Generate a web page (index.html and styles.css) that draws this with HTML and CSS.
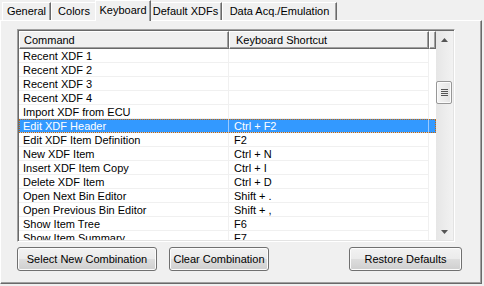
FILE: index.html
```html
<!DOCTYPE html>
<html lang="en">

<head>
    <meta charset="UTF-8">
    <title>Options - Keyboard</title>
    <link rel="stylesheet" href="styles.css">
</head>

<body>
    <div class="window">
        <div class="tabs">
            <div class="tab tab-general">General</div>
            <div class="tab tab-colors">Colors</div>
            <div class="tab tab-keyboard active">Keyboard</div>
            <div class="tab tab-xdfs">Default XDFs</div>
            <div class="tab tab-acq">Data Acq./Emulation</div>
        </div>

        <div class="page">
            <div class="list">
                <div class="list-main">
                    <div class="header">
                        <div class="hcell col-cmd">Command</div>
                        <div class="hcell col-key">Keyboard Shortcut</div>
                        <div class="hcell filler"></div>
                    </div>
                    <div class="rows">
                        <div class="row"><span>Recent XDF 1</span><span></span></div>
                        <div class="row"><span>Recent XDF 2</span><span></span></div>
                        <div class="row"><span>Recent XDF 3</span><span></span></div>
                        <div class="row"><span>Recent XDF 4</span><span></span></div>
                        <div class="row"><span>Import XDF from ECU</span><span></span></div>
                        <div class="row selected"><span>Edit XDF Header</span><span>Ctrl + F2</span></div>
                        <div class="row"><span>Edit XDF Item Definition</span><span>F2</span></div>
                        <div class="row"><span>New XDF Item</span><span>Ctrl + N</span></div>
                        <div class="row"><span>Insert XDF Item Copy</span><span>Ctrl + I</span></div>
                        <div class="row"><span>Delete XDF Item</span><span>Ctrl + D</span></div>
                        <div class="row"><span>Open Next Bin Editor</span><span>Shift + .</span></div>
                        <div class="row"><span>Open Previous Bin Editor</span><span>Shift + ,</span></div>
                        <div class="row"><span>Show Item Tree</span><span>F6</span></div>
                        <div class="row"><span>Show Item Summary</span><span>F7</span></div>
                    </div>
                </div>

                <div class="scrollbar">
                    <div class="arrow">
                        <svg width="7" height="4" viewBox="0 0 7 4"><path d="M3.5 0 L7 4 L0 4 Z" fill="#555"/></svg>
                    </div>
                    <div class="track">
                        <div class="thumb">
                            <span class="grip"></span>
                            <span class="grip"></span>
                            <span class="grip"></span>
                            <span class="grip"></span>
                        </div>
                    </div>
                    <div class="arrow">
                        <svg width="7" height="4" viewBox="0 0 7 4"><path d="M0 0 L7 0 L3.5 4 Z" fill="#555"/></svg>
                    </div>
                </div>
            </div>

            <div class="buttons">
                <button class="btn btn-select">Select New Combination</button>
                <button class="btn btn-clear">Clear Combination</button>
                <button class="btn btn-restore">Restore Defaults</button>
            </div>
        </div>
    </div>
</body>

</html>
```

FILE: styles.css
```css
* {
    margin: 0;
    padding: 0;
    box-sizing: border-box;
}

body {
    font-family: 'Liberation Sans', Arial, sans-serif;
    font-size: 11px;
    color: #000;
    background: #f0f0f0;
}

.window {
    width: 484px;
    height: 286px;
}

/* tab strip */
.tabs {
    display: flex;
    align-items: flex-end;
    height: 20px;
    padding-left: 2px;
    position: relative;
    z-index: 1;
}

.tab {
    height: 18px;
    line-height: 17px;
    text-align: center;
    background: #f0f0f0;
    border-top: 1px solid #fff;
    border-left: 1px solid #fff;
    border-right: 1px solid #696969;
    box-shadow: inset -1px 0 #a0a0a0;
    white-space: nowrap;
}

.tab.active {
    height: 21px;
    line-height: 18px;
    margin: 0 -2px -1px;
    position: relative;
    z-index: 2;
}

.tab-general { width: 49px; }
.tab-colors { width: 46px; }
.tab-keyboard { width: 56px; }
.tab-xdfs { width: 73px; }
.tab-acq { width: 115px; }

/* tab page */
.page {
    width: 482px;
    height: 264px;
    border-top: 1px solid #fff;
    border-left: 1px solid #fff;
    border-right: 1px solid #696969;
    border-bottom: 1px solid #696969;
    box-shadow: inset -1px -1px #a0a0a0;
    padding: 8px 19px 0 16px;
}

/* list view */
.list {
    display: flex;
    width: 438px;
    height: 213px;
    background: #fff;
    border: 1px solid;
    border-color: #a0a0a0 #fff #fff #a0a0a0;
    box-shadow: inset 1px 1px #696969, inset -1px -1px #e3e3e3;
    padding: 1px;
}

.list-main {
    flex: 1;
    overflow: hidden;
}

.header {
    display: flex;
    height: 18px;
}

.hcell {
    background: #f0f0f0;
    border-top: 1px solid #fff;
    border-left: 1px solid #fff;
    border-right: 1px solid #696969;
    border-bottom: 1px solid #696969;
    box-shadow: inset -1px -1px #a0a0a0;
    line-height: 16px;
    padding-left: 4px;
    white-space: nowrap;
}

.col-cmd {
    width: 210px;
}

.col-key {
    width: 200px;
    padding-left: 6px;
}

.filler {
    flex: 1;
}

.row {
    display: grid;
    grid-template-columns: 210px 200px;
    height: 14px;
}

.row span {
    line-height: 12px;
    padding: 1px 0 0 4px;
    border-right: 1px solid #f0f0f0;
    border-bottom: 1px solid #f0f0f0;
    white-space: nowrap;
    overflow: hidden;
}

.row span + span {
    padding-left: 5px;
}

.row.selected {
    background: #3399ff;
    color: #fff;
    outline: 1px dotted #cc6600;
    outline-offset: -1px;
}

.row.selected span {
    border-color: #9ccbff;
}

/* scrollbar */
.scrollbar {
    width: 17px;
    display: flex;
    flex-direction: column;
    background: linear-gradient(to right, #e6e6e6, #f2f2f2);
}

.arrow {
    height: 17px;
    display: flex;
    align-items: center;
    justify-content: center;
}

.track {
    flex: 1;
    padding-top: 33px;
}

.thumb {
    width: 16px;
    height: 23px;
    border: 1px solid #979797;
    border-radius: 2px;
    background: linear-gradient(to right, #f4f4f4, #e4e4e4);
    box-shadow: inset 0 0 0 1px #fbfbfb;
    display: flex;
    flex-direction: column;
    align-items: center;
    justify-content: center;
    gap: 1px;
}

.grip {
    width: 7px;
    height: 1px;
    background: #555;
}

/* buttons */
.buttons {
    display: flex;
    gap: 12px;
    margin-top: 5px;
}

.btn {
    height: 24px;
    font-family: inherit;
    font-size: 11px;
    color: #000;
    border: 1px solid #707070;
    border-radius: 3px;
    background: linear-gradient(#f2f2f2 0%, #ebebeb 48%, #dddddd 52%, #cfcfcf 100%);
    box-shadow: inset 0 0 0 1px #fcfcfc;
}

.btn-select {
    width: 140px;
}

.btn-clear {
    width: 100px;
}

.btn-restore {
    width: 113px;
    margin-left: auto;
}
```
